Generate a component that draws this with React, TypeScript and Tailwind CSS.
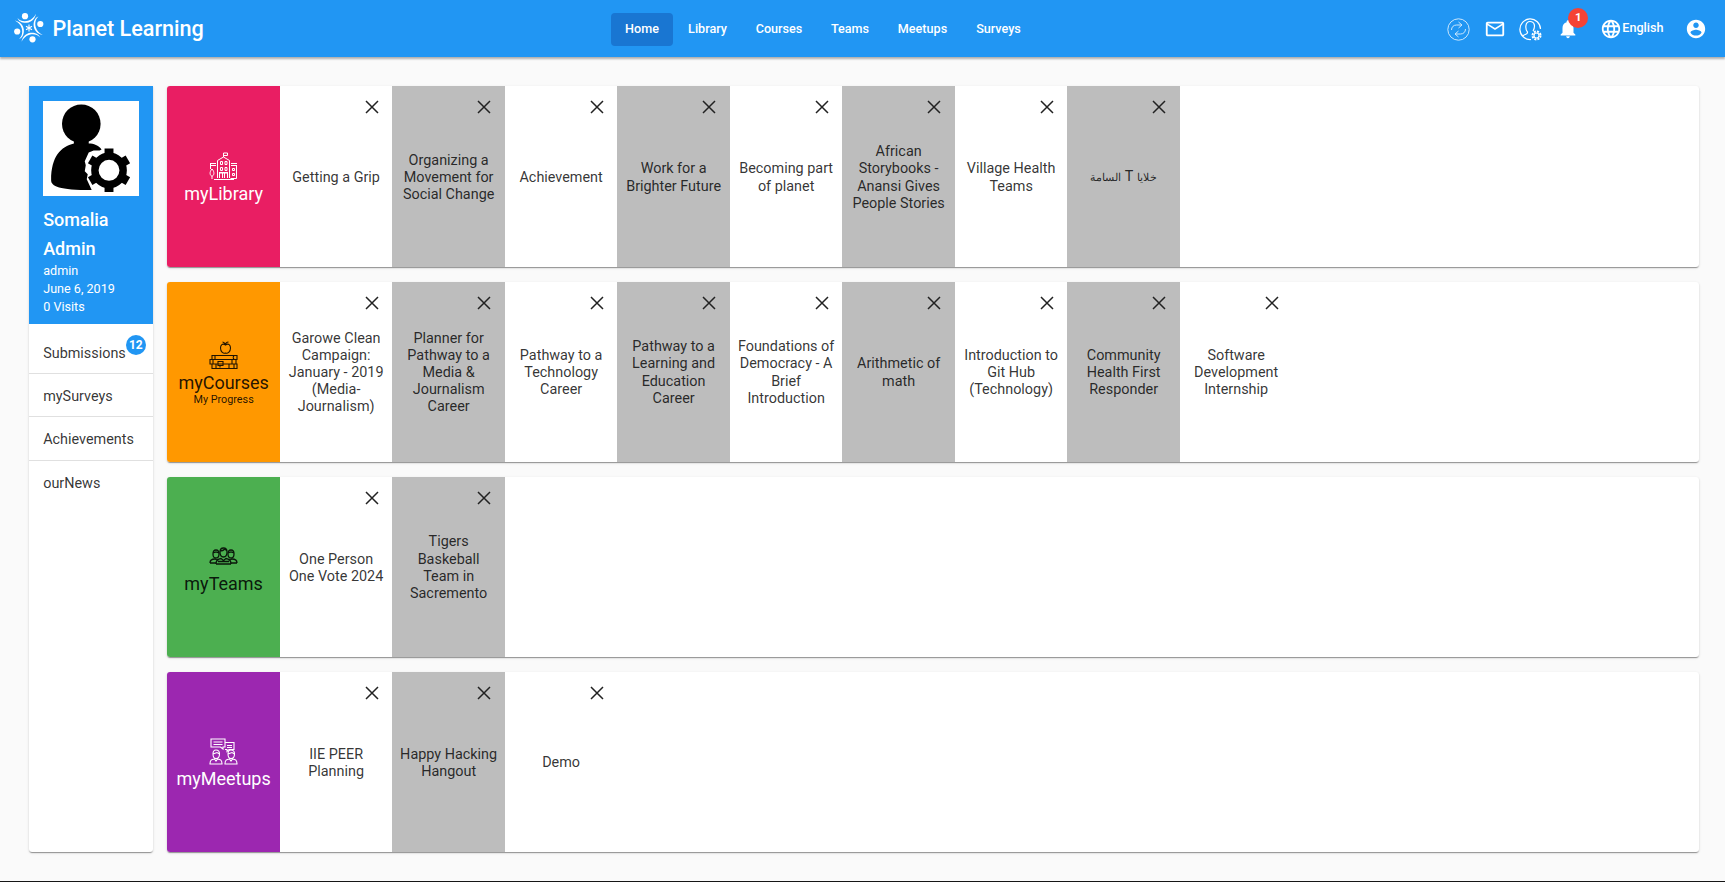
import React from "react";

type Row = {
  name: string;
  sub?: string;
  bg: string;
  light: boolean;
  icon: React.ReactNode;
  items: string[][];
};

const Library = () => (
  <svg className="block h-[29px] w-[29px]" viewBox="0 0 29 29" fill="none" stroke="currentColor" strokeWidth="1">
    <path d="M14.500 5V1h4v2.500h-4M8.500 26V8.500L14.500 5l6 3.500V26M5 27.500h20M1 11.500h6M1 13.500h6M22 11.500h6M22 13.500h6M27.500 13v13.500h-6M1.500 11v6" />
    <path d="M3 17c-3 3-2 7 0 7s3-4 0-7zM3 24v3M10.500 26v-5h8v5M10 20.500h9M13.500 21v5M15.500 21v5" />
    <path d="M11.500 9.500h2v3h-2zM16 9.500h2v3h-2zM11.500 15.500h2v3h-2zM16 15.500h2v3h-2zM23.500 16.500h2v2h-2zM23.500 21.500h2v2h-2z" />
  </svg>
);
const Courses = () => (
  <svg className="block h-[29px] w-[29px]" viewBox="0 0 29 29" fill="none" stroke="currentColor" strokeWidth="1.100">
    <path d="M16.500 4c-3-2-5 0-5 3 0 4 3 6 5 5 2 1 5-1 5-5 0-3-2-5-5-3zM16.500 4c0-2 1-3 3-3M16.500 3c-1-1-2-2-3-2" />
    <path d="M3 14.500h25v4H3zM25 14.500c-1 1-1 3 0 4M6 14.500v4M1 18.500h22v4.500H1zM4 18.500V23M23 18.500h4V23M3 23h25v4.500H3zM7 23v4.500M20 23v4.500M9 20.500h5v4H9zM11 24.500v2M25 23v4.500" />
  </svg>
);
const Teams = () => (
  <svg className="block h-[29px] w-[29px]" viewBox="0 0 29 29" fill="none" stroke="currentColor" strokeWidth="1.300">
    <path d="M11 10c0-3 1-4 3.500-4S18 7 18 10c0 3-1.500 5-3.500 5S11 13 11 10zM11 9c3 0 4-1 5-2l2 2" />
    <path d="M4 12c0-3 1-4 3-4s3 1 3 4-1 4-3 4-3-1-3-4zM19 12c0-3 1-4 3-4s3 1 3 4-1 4-3 4-3-1-3-4zM4 11l3-1 3 1M19 11l3-1 3 1" />
    <path d="M1 21c0-3 2-4 5-4l2 1 1-1M28 21c0-3-2-4-5-4l-2 1-1-1M1 21h6M22 21h6M7 22c0-4 2-5 5-5.500l2.500 2 2.500-2c3 .5 5 1.500 5 5.500M7 22h15M9 19.500h11" />
  </svg>
);
const Meetups = () => (
  <svg className="block h-[29px] w-[29px]" viewBox="0 0 29 29" fill="none" stroke="currentColor" strokeWidth="1.100">
    <path d="M2 2h14v8h-2v2l-2.500-2H2zM4.500 5h9M4.500 7.500h9M16 5.500h9v7h-5l-2 2v-2h-2M18 8.500h5M18 10.500h5" />
    <path d="M4 17c0-3 1-4 3-4s3.500 1 3.500 4-1.500 4.500-3.500 4.500S4 20 4 17zM4 17l4-1.500 2.500 1.500M1 27c0-4 1.500-4.500 4.500-5l1.500 2 1.500-2c3 .5 4.500 1 4.500 5zM19 17c0-3 1-4 3-4s3.500 1 3.500 4-1.500 4.500-3.500 4.500S19 20 19 17zM19 17l4-1.500 2.500 1.500M16 27c0-4 1.500-4.500 4.500-5l1.500 2 1.500-2c3 .5 4.500 1 4.500 5z" />
  </svg>
);

const rows: Row[] = [
  {
    name: "myLibrary", bg: "bg-[#e91e63]", light: true, icon: <Library />,
    items: [["Getting a Grip"], ["Organizing a", "Movement for", "Social Change"], ["Achievement"], ["Work for a", "Brighter Future"], ["Becoming part", "of planet"], ["African", "Storybooks -", "Anansi Gives", "People Stories"], ["Village Health", "Teams"], ["خلايا T السامة"]],
  },
  {
    name: "myCourses", sub: "My Progress", bg: "bg-[#ff9800]", light: false, icon: <Courses />,
    items: [["Garowe Clean", "Campaign:", "January - 2019", "(Media-", "Journalism)"], ["Planner for", "Pathway to a", "Media &", "Journalism", "Career"], ["Pathway to a", "Technology", "Career"], ["Pathway to a", "Learning and", "Education", "Career"], ["Foundations of", "Democracy - A", "Brief", "Introduction"], ["Arithmetic of", "math"], ["Introduction to", "Git Hub", "(Technology)"], ["Community", "Health First", "Responder"], ["Software", "Development", "Internship"]],
  },
  {
    name: "myTeams", bg: "bg-[#4caf50]", light: false, icon: <Teams />,
    items: [["One Person", "One Vote 2024"], ["Tigers", "Baskeball", "Team in", "Sacremento"]],
  },
  {
    name: "myMeetups", bg: "bg-[#9c27b0]", light: true, icon: <Meetups />,
    items: [["IIE PEER", "Planning"], ["Happy Hacking", "Hangout"], ["Demo"]],
  },
];

const Logo = () => (
  <svg className="h-[30px] w-[30px]" viewBox="0 0 30 30" fill="#fff">
    {[0, 90, 180, 270].map((a) => (
      <g key={a} transform={`rotate(${a} 14.750 14.750)`}>
        <circle cx="11" cy="3.200" r="3.100" />
        <path d="M3.500 5C6 8 10 8.800 14 7.800c4-1.200 6-3.500 8-7C21 6 17.500 9.300 13 9.800 8.500 10.200 4.500 8.500 3.500 5z" />
      </g>
    ))}
    <path d="M15 11.500v7M12 13.200l6 3.600M18 13.200l-6 3.600" stroke="#fff" strokeWidth="1.100" />
  </svg>
);

const Avatar = () => (
  <svg className="block h-[95px] w-full bg-white" viewBox="0 0 96 96">
    <circle cx="38.500" cy="23" r="19.500" />
    <path d="M31 38v5c-13 3-23 13-23 37 0 6 8 10 41 10l-5-11 1-5-3-3 1-6-1-4 4-9 5-2 6 0 2-1c-3-4-8-6-13-6v-5z" />
    <g transform="translate(66.500 70)">
      <circle r="14.300" fill="none" stroke="#000" strokeWidth="7.500" />
      {[0, 60, 120, 180, 240, 300].map((a) => (
        <path key={a} d="M-4.500-22h9v7h-9z" transform={`rotate(${a})`} />
      ))}
    </g>
  </svg>
);

const navItems = [
  { label: "Home", cls: "w-[62px] bg-[#1976d2]" },
  { label: "Library", cls: "w-[69px]" },
  { label: "Courses", cls: "w-[74px]" },
  { label: "Teams", cls: "w-[68px]" },
  { label: "Meetups", cls: "w-[77px]" },
  { label: "Surveys", cls: "w-[75px]" },
];

const cardShadow = "shadow-[0_1px_1px_rgba(0,0,0,0.18),0_2px_1px_-1px_rgba(0,0,0,0.22),0_1px_3px_rgba(0,0,0,0.12)]";

const isArabic = (s: string) => /[\u0600-\u06ff]/.test(s);

export default function App() {
  return (
    <div className="flex h-[882px] w-[1725px] flex-col overflow-hidden bg-[#fafafa] font-['Roboto','Noto_Sans',sans-serif] text-[14.4px] text-black/87">
      <header className="relative grid h-[57px] shrink-0 grid-cols-[611px_1fr_auto] items-center bg-[#2196f3] text-white shadow-[0_2px_2px_rgba(0,0,0,0.3)]">
        <div className="flex items-center pl-[14px]">
          <Logo />
          <h1 className="ml-[8.500px] pt-[2px] text-[21.6px] font-medium">Planet Learning</h1>
        </div>
        <nav className="flex pt-[2px] text-[12.6px] font-medium">
          {navItems.map((n) => (
            <a key={n.label} className={`flex h-[32.400px] items-center justify-center rounded-[4px] ${n.cls}`}>{n.label}</a>
          ))}
        </nav>
        <div className="flex h-full items-center pt-px pr-[18px]">
          <svg className="h-[23px] w-[23px]" viewBox="0 0 23 23" fill="none" stroke="#fff" strokeWidth="0.900" opacity="0.85">
            <circle cx="11.500" cy="11.500" r="10.700" />
            <path d="M4.500 12c0-3 2-5 5-5h5M11.500 4l3.500 3-3.500 3M18.500 11c0 3-2 5-5 5h-5M11.500 13L8 16l3.500 3" />
          </svg>
          <svg className="ml-[14px] h-[22px] w-[22px]" viewBox="0 0 24 24" fill="#fff">
            <path d="M22 6c0-1.100-.9-2-2-2H4c-1.100 0-2 .9-2 2v12c0 1.100.9 2 2 2h16c1.100 0 2-.9 2-2V6zm-2 0-8 5-8-5h16zm0 12H4V8l8 5 8-5v10z" />
          </svg>
          <svg className="ml-[13px] h-[23px] w-[23px]" viewBox="0 0 23 23" fill="none" stroke="#fff" strokeWidth="1.200">
            <path d="M12 21.500A10.300 10.300 0 1 1 21.500 11" />
            <path d="M4 18c1-2 5-1 4.500-4C6 11 6 3.500 11 3.500S16.500 9 14 13" />
            <circle cx="17.500" cy="17.500" r="4" strokeWidth="2" strokeDasharray="2 1.140" />
            <circle cx="17.500" cy="17.500" r="2.500" />
          </svg>
          <div className="relative ml-[15px]">
            <svg className="h-[22px] w-[22px]" viewBox="0 0 24 24" fill="#fff">
              <path d="M12 22c1.100 0 2-.9 2-2h-4c0 1.100.89 2 2 2zm6-6v-5c0-3.070-1.640-5.640-4.500-6.320V4c0-.83-.67-1.500-1.500-1.500s-1.500.67-1.500 1.500v.68C7.630 5.360 6 7.920 6 11v5l-2 2v1h16v-1l-2-2z" />
            </svg>
            <span className="absolute -top-[10px] left-[11px] flex h-[20px] w-[20px] items-center justify-center rounded-full bg-[#f44336] text-[11.500px] font-bold">1</span>
          </div>
          <svg className="ml-[21px] h-[22px] w-[22px]" viewBox="0 0 24 24" fill="#fff">
            <path d="M11.990 2C6.470 2 2 6.480 2 12s4.470 10 9.990 10C17.520 22 22 17.520 22 12S17.520 2 11.990 2zm6.930 6h-2.950c-.32-1.250-.78-2.450-1.380-3.560 1.840.63 3.370 1.910 4.330 3.560zM12 4.040c.83 1.200 1.480 2.530 1.910 3.960h-3.820c.43-1.430 1.080-2.760 1.910-3.960zM4.260 14C4.100 13.360 4 12.690 4 12s.1-1.360.26-2h3.380c-.08.66-.14 1.320-.14 2s.06 1.340.14 2H4.260zm.82 2h2.950c.32 1.250.78 2.450 1.380 3.560-1.840-.63-3.370-1.900-4.330-3.560zm2.950-8H5.080c.96-1.660 2.490-2.930 4.330-3.560C8.810 5.550 8.350 6.750 8.030 8zM12 19.960c-.83-1.200-1.480-2.530-1.910-3.960h3.820c-.43 1.430-1.080 2.760-1.910 3.960zM14.340 14H9.660c-.09-.66-.16-1.320-.16-2s.07-1.350.16-2h4.680c.09.65.16 1.320.16 2s-.07 1.340-.16 2zm.25 5.560c.6-1.110 1.060-2.310 1.380-3.560h2.950c-.96 1.650-2.490 2.930-4.330 3.560zM16.360 14c.08-.66.14-1.320.14-2s-.06-1.340-.14-2h3.380c.16.64.26 1.310.26 2s-.1 1.360-.26 2h-3.380z" />
          </svg>
          <span className="pb-px text-[12.6px] font-medium">English</span>
          <svg className="ml-[21.500px] h-[22px] w-[22px]" viewBox="0 0 24 24" fill="#fff">
            <path d="M12 2C6.480 2 2 6.480 2 12s4.480 10 10 10 10-4.480 10-10S17.520 2 12 2zm0 3c1.660 0 3 1.340 3 3s-1.340 3-3 3-3-1.340-3-3 1.340-3 3-3zm0 14.200c-2.500 0-4.710-1.280-6-3.220.03-1.990 4-3.080 6-3.080 1.990 0 5.970 1.090 6 3.080-1.290 1.940-3.500 3.220-6 3.220z" />
          </svg>
        </div>
      </header>

      <main className="flex min-h-0 flex-1 gap-[14.4px] pt-[29.400px] pr-[26px] pl-[28.8px]">
        <aside className={`h-[765.900px] w-[124.200px] shrink-0 overflow-hidden rounded-b-[3px] bg-white ${cardShadow}`}>
          <div className="h-[237.600px] bg-[#2196f3] p-[14.4px] text-white">
            <Avatar />
            <h3 className="mt-[10px] text-[18px] leading-[28.8px] font-medium">Somalia<br />Admin</h3>
            <div className="-mt-[1.200px] text-[12.6px] leading-[18px]">admin<br />June 6, 2019<br />0 Visits</div>
          </div>
          <ul className="pt-[6.800px] leading-[46px] text-black/80">
            <li className="relative h-[43.300px] border-b border-black/12 pl-[14.4px]">
              Submissions
              <span className="absolute top-[4px] left-[97px] flex h-[20px] w-[20px] items-center justify-center rounded-full bg-[#2196f3] text-[12px] leading-none font-bold text-white">12</span>
            </li>
            <li className="h-[43.300px] border-b border-black/12 pl-[14.4px]">mySurveys</li>
            <li className="h-[43.300px] border-b border-black/12 pl-[14.4px]">Achievements</li>
            <li className="h-[43.300px] pl-[14.4px]">ourNews</li>
          </ul>
        </aside>
        <div className="flex min-w-0 flex-1 flex-col gap-[14.4px]">
          {rows.map((r) => (
            <section key={r.name} className={`flex h-[180.720px] shrink-0 overflow-hidden rounded-[3px] bg-white ${cardShadow}`}>
              <div className={`flex w-[112.500px] shrink-0 flex-col items-center justify-center ${r.sub ? "pt-[2px]" : "pt-[4px]"} ${r.bg} ${r.light ? "text-white" : "text-black/87"}`}>
                {r.icon}
                <span className="text-[18px] leading-[25px]">{r.name}</span>
                {r.sub && <span className="text-[10.800px] leading-[10px]">{r.sub}</span>}
              </div>
              {r.items.map((lines, i) => (
                <div key={lines[0]} className={`relative flex w-[112.500px] shrink-0 flex-col items-center justify-center pt-[1.500px] text-center leading-[17.200px] text-black/80 ${i % 2 ? "bg-[#bdbdbd]" : "bg-white"}`}>
                  <svg className="absolute top-[14px] right-[13.500px] h-[14px] w-[14px]" viewBox="0 0 14 14" fill="none" stroke="#222" strokeWidth="1.500">
                    <path d="M1 1l12 12M13 1L1 13" />
                  </svg>
                  {lines.map((l) =>
                    isArabic(l) ? (
                      <span key={l} dir="rtl" className="whitespace-nowrap"><span className="text-[11px]">خلايا</span> T <span className="text-[11px]">السامة</span></span>
                    ) : (
                      <span key={l} className="whitespace-nowrap">{l}</span>
                    ),
                  )}
                </div>
              ))}
            </section>
          ))}
        </div>
      </main>
      <div className="h-px w-full shrink-0 bg-[#151515]" />
    </div>
  );
}
